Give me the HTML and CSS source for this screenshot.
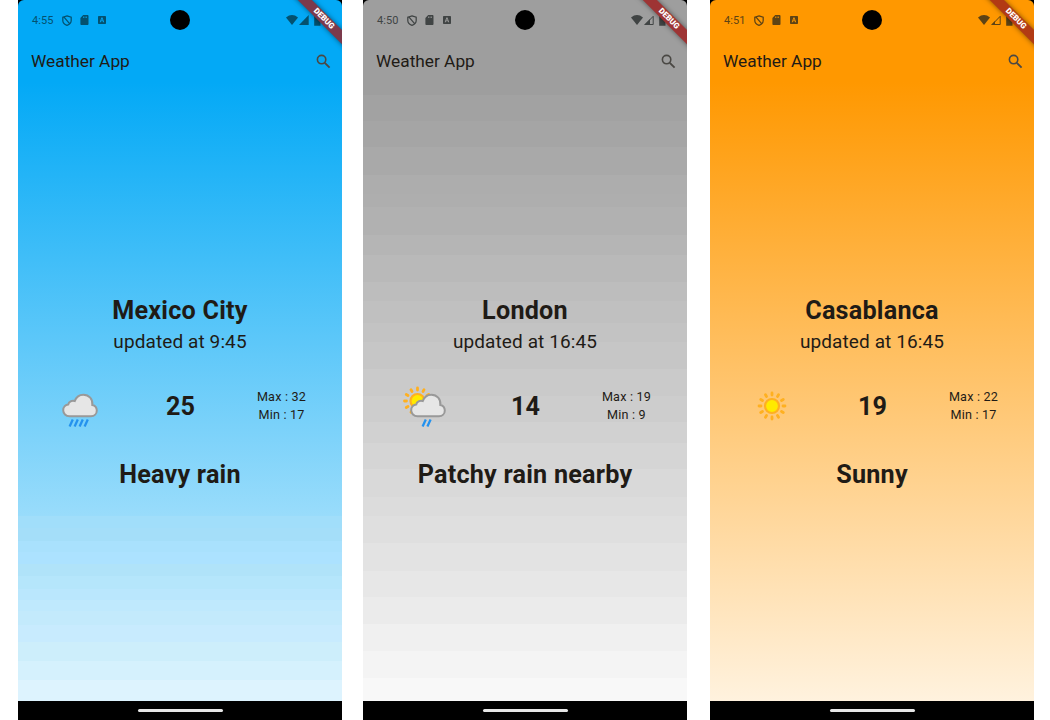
FILE: index.html
```
<!DOCTYPE html>
<html lang="en">
<head>
<meta charset="utf-8">
<title>Weather App</title>
<link rel="stylesheet" href="styles.css">
</head>
<body>
<svg class="defs" width="0" height="0" aria-hidden="true">
  <symbol id="shield" viewBox="0 0 10 11"><path d="M5 .8 9.2 2.2V5.4C9.2 7.7 7.4 9.5 5 10.3 2.6 9.5.8 7.7.8 5.4V2.2ZM1.8 1.8 7.8 8.8" fill="none" stroke="currentColor" stroke-width="1.25"/></symbol>
  <symbol id="sd" viewBox="0 0 9 10"><path fill-rule="evenodd" d="M3.2 0H7.6Q8.5 0 8.5 1V9Q8.5 10 7.6 10H1.2Q.4 10 .4 9V3ZM3.1 1.6V3.1H3.8V1.6ZM4.7 1.6V3.1H5.4V1.6ZM6.3 1.6V3.1H7V1.6Z" fill="currentColor"/></symbol>
  <symbol id="badge" viewBox="0 0 8 8"><path fill-rule="evenodd" d="M.8 0H7.2Q8 0 8 .8V7.2Q8 8 7.2 8H.8Q0 8 0 7.2V.8Q0 0 .8 0ZM3.4 1.5 1.7 6.3H2.7L3 5.3H4.9L5.2 6.3H6.2L4.5 1.5ZM3.3 4.4 4 2.6 4.6 4.4Z" fill="currentColor"/></symbol>
  <symbol id="wifi" viewBox="0 0 12 10"><path d="M0 2.4Q6-2.2 12 2.4L6 9.9Z" fill="currentColor"/></symbol>
  <symbol id="signal-full" viewBox="0 0 10 10"><path d="M9.7 0V10H0Z" fill="currentColor"/></symbol>
  <symbol id="signal-mid" viewBox="0 0 10 10"><path d="M9.2 1.3V9.5H1.2Z" fill="none" stroke="currentColor"/><path d="M6 4V10H0Z" fill="currentColor"/></symbol>
  <symbol id="signal-low" viewBox="0 0 10 10"><path d="M9.2 1.3V9.5H1.2Z" fill="none" stroke="currentColor"/><path d="M4 6V10H0Z" fill="currentColor"/></symbol>
  <symbol id="battery" viewBox="0 0 7 11"><path d="M2 0H4.6V1.1H6.5V10.7H.2V1.1H2Z" fill="currentColor"/></symbol>
  <symbol id="search" viewBox="0 0 15 15"><circle cx="5.6" cy="5.6" r="4.2" fill="none" stroke="currentColor" stroke-width="1.6"/><path d="M8.8 8.8 13.6 13.6" stroke="currentColor" stroke-width="1.9"/></symbol>
  <symbol id="cloud" viewBox="0 0 36 25"><path d="M7.5 23.2C3.8 23.2 1.2 20.4 1.2 17.3 1.2 14 3.6 11.6 6.3 11.4 6.7 8.6 9.8 7 12.8 8 14.2 4 17.7 1.7 21.4 1.7 27 1.7 31 6.3 30.3 11.9 33 12.5 34.8 14.8 34.8 17.5 34.8 20.7 32.3 23.2 29 23.2Z" fill="#e6e6e6" stroke="#999" stroke-width="2"/></symbol>
  <symbol id="sun" viewBox="-15 -15 30 30">
    <g stroke="#ffb020" stroke-width="2.8" stroke-linecap="round">
      <path d="M0-13V-11M0 11V13M-13 0H-11M11 0H13"/>
      <path d="M0-13V-11M0 11V13M-13 0H-11M11 0H13" transform="rotate(30)"/>
      <path d="M0-13V-11M0 11V13M-13 0H-11M11 0H13" transform="rotate(60)"/>
    </g>
    <circle r="7" fill="#ffea00" stroke="#ffb020" stroke-width="2.2"/>
  </symbol>
</svg>

<main class="gallery">
  <section class="phone phone--blue">
    <div class="screen">
      <header class="status">
        <span class="time">4:55</span>
        <svg class="i-shield"><use href="#shield"/></svg>
        <svg class="i-sd"><use href="#sd"/></svg>
        <svg class="i-badge"><use href="#badge"/></svg>
        <span class="spacer"></span>
        <svg class="i-wifi"><use href="#wifi"/></svg>
        <svg class="i-signal"><use href="#signal-full"/></svg>
        <svg class="i-battery"><use href="#battery"/></svg>
      </header>
      <div class="camera"></div>
      <div class="appbar"><h1>Weather App</h1><svg class="i-search"><use href="#search"/></svg></div>
      <div class="content">
        <h2>Mexico City</h2>
        <p class="updated">updated at 9:45</p>
        <div class="reading">
          <svg class="weather" viewBox="0 0 50 50"><use href="#cloud" x="7" y="12" width="36" height="25"/><path d="M17.8 38.5 14.6 45.5M22.8 38.5 19.6 45.5M27.8 38.5 24.6 45.5M32.8 38.5 29.6 45.5" stroke="#2492ee" stroke-width="2.3"/></svg>
          <strong>25</strong>
          <div class="range"><span>Max : 32</span><span>Min : 17</span></div>
        </div>
        <p class="condition">Heavy rain</p>
      </div>
      <div class="ribbon">DEBUG</div>
    </div>
    <footer class="nav"><span></span></footer>
  </section>

  <section class="phone phone--grey">
    <div class="screen">
      <header class="status">
        <span class="time">4:50</span>
        <svg class="i-shield"><use href="#shield"/></svg>
        <svg class="i-sd"><use href="#sd"/></svg>
        <svg class="i-badge"><use href="#badge"/></svg>
        <span class="spacer"></span>
        <svg class="i-wifi"><use href="#wifi"/></svg>
        <svg class="i-signal"><use href="#signal-mid"/></svg>
        <svg class="i-battery"><use href="#battery"/></svg>
      </header>
      <div class="camera"></div>
      <div class="appbar"><h1>Weather App</h1><svg class="i-search"><use href="#search"/></svg></div>
      <div class="content">
        <h2>London</h2>
        <p class="updated">updated at 16:45</p>
        <div class="reading">
          <svg class="weather" viewBox="0 0 50 50"><use href="#sun" x="2.5" y="5" width="30" height="30"/><use href="#cloud" x="10" y="12" width="36" height="25"/><path d="M25.8 38.5 22.6 45.5M30.6 38.5 27.4 45.5" stroke="#2492ee" stroke-width="2.3"/></svg>
          <strong>14</strong>
          <div class="range"><span>Max : 19</span><span>Min : 9</span></div>
        </div>
        <p class="condition">Patchy rain nearby</p>
      </div>
      <div class="ribbon">DEBUG</div>
    </div>
    <footer class="nav"><span></span></footer>
  </section>

  <section class="phone phone--orange">
    <div class="screen">
      <header class="status">
        <span class="time">4:51</span>
        <svg class="i-shield"><use href="#shield"/></svg>
        <svg class="i-sd"><use href="#sd"/></svg>
        <svg class="i-badge"><use href="#badge"/></svg>
        <span class="spacer"></span>
        <svg class="i-wifi"><use href="#wifi"/></svg>
        <svg class="i-signal"><use href="#signal-low"/></svg>
        <svg class="i-battery"><use href="#battery"/></svg>
      </header>
      <div class="camera"></div>
      <div class="appbar"><h1>Weather App</h1><svg class="i-search"><use href="#search"/></svg></div>
      <div class="content">
        <h2>Casablanca</h2>
        <p class="updated">updated at 16:45</p>
        <div class="reading">
          <svg class="weather" viewBox="0 0 50 50"><use href="#sun" x="10" y="10" width="30" height="30"/></svg>
          <strong>19</strong>
          <div class="range"><span>Max : 22</span><span>Min : 17</span></div>
        </div>
        <p class="condition">Sunny</p>
      </div>
      <div class="ribbon">DEBUG</div>
    </div>
    <footer class="nav"><span></span></footer>
  </section>
</main>
</body>
</html>
```
FILE: styles.css
```
* { box-sizing: border-box; margin: 0; }
body { background: #fff; font-family: Roboto, "Liberation Sans", sans-serif; color: #1f1b16; overflow: hidden; }
svg { display: block; flex: none; }
.defs { position: absolute; }
.gallery { display: flex; padding-left: 18px; height: 720px; }
.phone { width: 324px; height: 720px; background: #000; display: flex; flex-direction: column; }
.phone--grey { margin-left: 21px; }
.phone--orange { margin-left: 23px; }
.screen { position: relative; height: 701px; overflow: hidden; border-radius: 6px 6px 0 0; display: flex; flex-direction: column; }

.phone--blue { --status: #04516f; --ribbon: #7b3a4c; }
.phone--grey { --status: #404444; --ribbon: #9e3434; }
.phone--orange { --status: #5d4315; --ribbon: #b23a14; }
.phone--blue .screen {
  background: linear-gradient(#03a9f6 82px, #99dcfb 516px,
    #a1defa 516px 528px, #a4def9 528px 541px, #a9e1fd 541px 552px, #ace2ff 552px 564px,
    #b0e3f9 564px 576px, #b5e6fb 576px 589px, #bae7fd 589px 600px, #bfe9fd 600px 611px,
    #c3eafc 611px 625px, #c8ebfe 625px 642px, #cdeefb 642px 661px, #d5f1fd 661px 680px, #ddf3fe 680px);
}
.phone--grey .screen {
  background: linear-gradient(#9e9e9e 95px, #a2a2a2 95px 121px, #a5a5a5 121px 147px, #a9a9a9 147px 175px,
    #adadad 175px 194px, #aeaeae 194px 207px, #b1b1b1 207px 235px, #b5b5b5 235px 255px, #b9b9b9 255px 282px,
    #bdbdbd 282px 301px, #c0c0c0 301px 323px, #c3c3c3 323px 342px, #c6c6c6 342px 369px, #cacaca 369px 396px,
    #cdcdcd 396px 422px, #d1d1d1 422px 443px, #d5d5d5 443px 469px, #d9d9d9 469px 497px, #dcdcdc 497px 516px,
    #dfdfdf 516px 543px, #e3e3e3 543px 571px, #e7e7e7 571px 597px, #ebebeb 597px 624px, #f0f0f0 624px 651px,
    #f4f4f4 651px 678px, #f8f8f8 678px);
}
.phone--orange .screen { background: linear-gradient(#ff9800 82px, #fff2de 701px); }

.status { height: 40px; padding: 0 21.5px 0 14px; display: flex; align-items: center; color: var(--status); }
.time { width: 30px; font-size: 11px; letter-spacing: .1px; }
.spacer { flex: 1; }
.i-shield { width: 10px; height: 11px; }
.i-sd { width: 9px; height: 10px; margin-left: 7.5px; }
.i-badge { width: 8px; height: 8px; margin-left: 9px; }
.i-wifi { width: 12px; height: 10px; }
.i-signal { width: 10px; height: 10px; margin-left: 1px; }
.i-battery { width: 7px; height: 11px; margin-left: 5px; }
.camera { position: absolute; top: 10px; left: 152px; width: 20px; height: 20px; border-radius: 50%; background: #000; }

.appbar { height: 43px; padding: 0 11.5px 0 13px; display: flex; justify-content: space-between; align-items: center; }
.appbar h1 { font-size: 17.3px; font-weight: 400; line-height: 22px; padding-bottom: 2px; }
.i-search { width: 15px; height: 15px; color: #4a4844; }

.content { flex: 1; padding-top: 212px; text-align: center; }
h2, .condition, .reading strong { font-size: 25.2px; font-weight: 700; line-height: 32px; }
h2, .condition { letter-spacing: .22px; }
.updated { font-size: 19px; line-height: 30px; letter-spacing: .1px; }
.reading { height: 50px; margin: 24px 10px 0 11px; display: grid; grid-template-columns: repeat(3, 1fr); align-items: center; justify-items: center; }
.reading strong { padding-top: 2px; }
.weather { width: 50px; height: 50px; }
.range { display: flex; flex-direction: column; font-size: 12.6px; line-height: 18px; letter-spacing: .2px; }
.condition { margin-top: 28px; }

.ribbon { position: absolute; top: 14px; left: 260.5px; width: 90px; height: 9.5px; transform: rotate(45deg); background: var(--ribbon); box-shadow: 0 0 5px rgba(0,0,0,.5); color: #fff; font-size: 8px; font-weight: 900; line-height: 9.5px; text-align: center; }
.nav { height: 19px; display: flex; justify-content: center; padding-top: 8px; }
.nav span { width: 85px; height: 3px; border-radius: 2px; background: #e6e6e6; }
```
